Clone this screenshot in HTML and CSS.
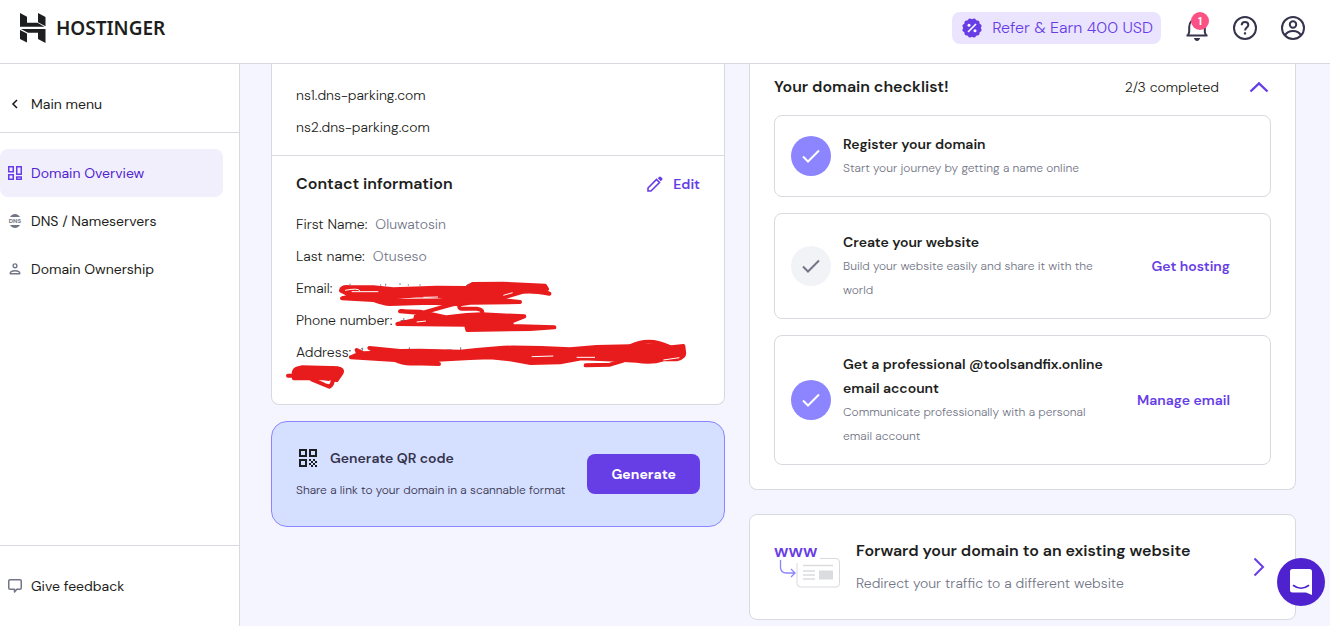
FILE: index.html
```html
<!DOCTYPE html>
<html lang="en">
<head>
<meta charset="utf-8">
<meta name="viewport" content="width=device-width, initial-scale=1">
<title>Domain Overview | Hostinger</title>
<link rel="stylesheet" href="styles.css">
</head>
<body>
<header class="topbar">
  <a class="brand" href="#">
    <svg width="26" height="30" viewBox="0 0 26 30" fill="#1d1e20" aria-hidden="true"><path d="M0 0 7 3.800V9.800H17.500L24.500 13.800H0ZM18 0 25.500 4V13.300L18 9.300ZM0 16H18L25.500 16V30L18 26V19.700H8L1 16ZM0 17 7 20.500V29.500L0 26Z"/></svg>
    <span class="brand-name">HOSTINGER</span>
  </a>
  <div class="topbar-actions">
    <a class="refer" href="#">
      <svg width="20" height="20" viewBox="0 0 20 20" aria-hidden="true"><g fill="#673de6"><rect x="2.500" y="2.500" width="15" height="15" rx="2"/><rect x="2.500" y="2.500" width="15" height="15" rx="2" transform="rotate(30 10 10)"/><rect x="2.500" y="2.500" width="15" height="15" rx="2" transform="rotate(60 10 10)"/></g><path d="m6 14 8-8" stroke="#fff" stroke-width="1.600"/><circle cx="7" cy="7.200" r="1.500" fill="#fff"/><circle cx="13" cy="12.800" r="1.500" fill="#fff"/></svg>
      <span>Refer &amp; Earn 400 USD</span>
    </a>
    <button class="icon-button" type="button" aria-label="Notifications">
      <svg width="24" height="26" viewBox="0 0 24 26" fill="none" aria-hidden="true"><path d="M1.500 20.500H22.500M3 20.500 4.200 17V12C4.200 7 7.500 4 12 4S19.800 7 19.800 12V17L21 20.500" stroke="#36344d" stroke-width="2"/><path d="M9 23H15C15 24.500 13.500 26 12 26S9 24.500 9 23Z" fill="#36344d"/></svg>
      <span class="badge">1</span>
    </button>
    <button class="icon-button" type="button" aria-label="Help">
      <svg width="24" height="24" viewBox="0 0 24 24" fill="none" stroke="#36344d" stroke-width="2" aria-hidden="true"><circle cx="12" cy="12" r="11"/><path d="M8.700 9.300C8.700 7.200 10.100 6 12 6s3.300 1.200 3.300 3c0 2.500-3.200 2.700-3.200 5.500"/><path d="M12 16.300v2.200" stroke-width="2.200"/></svg>
    </button>
    <button class="icon-button" type="button" aria-label="Account">
      <svg width="24" height="24" viewBox="0 0 24 24" fill="none" stroke="#36344d" stroke-width="2" aria-hidden="true"><circle cx="12" cy="12" r="11"/><circle cx="12" cy="8.500" r="3.200"/><path d="M4 19.500C7 13.500 17 13.500 20 19.500"/></svg>
    </button>
  </div>
</header>

<div class="shell">
  <nav class="sidebar" aria-label="Domain menu">
    <div class="side-head">
      <a class="side-link" href="#">
        <svg width="14" height="14" viewBox="0 0 14 14" fill="none" stroke="#1d1e20" stroke-width="1.600" aria-hidden="true"><path d="m9 3-4 4 4 4"/></svg>
        <span>Main menu</span>
      </a>
    </div>
    <div class="side-items">
      <a class="side-link active" href="#" aria-current="page">
        <svg width="14" height="14" viewBox="0 0 14 14" fill="none" stroke="#673de6" stroke-width="1.500" aria-hidden="true"><path d="M.75.75h4.500v5H.75zM8.750.75h4.500v7.500h-4.500zM.75 8.750h4.500v4.500H.75zM8.750 11h4.500v2.250h-4.500z"/></svg>
        <span>Domain Overview</span>
      </a>
      <a class="side-link" href="#">
        <svg width="14" height="14" viewBox="0 0 14 14" aria-hidden="true"><path d="M2 3C4.500-1 9.500-1 12 3ZM2 11C4.500 15 9.500 15 12 11Z" fill="#727586"/><text class="dns-mark" x="7" y="9" text-anchor="middle">DNS</text></svg>
        <span>DNS / Nameservers</span>
      </a>
      <a class="side-link" href="#">
        <svg width="14" height="14" viewBox="0 0 14 14" fill="none" stroke="#727586" stroke-width="1.400" aria-hidden="true"><circle cx="7" cy="3.800" r="1.900"/><path d="M2.200 11.800C2.200 7.800 11.800 7.800 11.800 11.800Z" stroke-linejoin="round"/></svg>
        <span>Domain Ownership</span>
      </a>
    </div>
    <div class="side-foot">
      <a class="side-link" href="#">
        <svg width="14" height="14" viewBox="0 0 14 14" fill="none" stroke="#727586" stroke-width="1.500" stroke-linejoin="round" aria-hidden="true"><path d="M2 .75H12A1.250 1.250 0 0 1 13.250 2V9A1.250 1.250 0 0 1 12 10.250H8.800L6.500 13V10.250H2A1.250 1.250 0 0 1 .75 9V2A1.250 1.250 0 0 1 2 .75Z"/></svg>
        <span>Give feedback</span>
      </a>
    </div>
  </nav>

  <main class="content">
    <div class="column">
      <section class="card card-scrolled">
        <ul class="rows nameservers">
          <li>ns1.dns-parking.com</li>
          <li>ns2.dns-parking.com</li>
        </ul>
        <div class="contact">
          <div class="contact-head">
            <h2 class="heading">Contact information</h2>
            <button class="text-button" type="button">
              <svg width="16" height="16" viewBox="0 0 16 16" aria-hidden="true"><path d="M1 15V12L9.500 3.500 12.500 6.500 4 15Z" fill="none" stroke="#673de6" stroke-width="1.600"/><path d="M10.800 2.200 12 1C12.500.3 13.400.3 14 1L15 2C15.700 2.600 15.700 3.500 15 4L13.800 5.200Z" fill="#673de6"/></svg>
              <span>Edit</span>
            </button>
          </div>
          <dl class="rows">
            <div class="row"><dt>First Name:</dt><dd>Oluwatosin</dd></div>
            <div class="row"><dt>Last name:</dt><dd>Otuseso</dd></div>
            <div class="row"><dt>Email:</dt><dd></dd></div>
            <div class="row"><dt>Phone number:</dt><dd>+</dd></div>
            <div class="row row-tall"><dt>Address:</dt><dd></dd></div>
          </dl>
          <svg class="scribble" width="450" height="140" viewBox="0 0 1350 420" aria-hidden="true">
            <path d="M240 47v-6M332 47v-4M347 47v-6M390 45v-5M415 47v-4M450 47v-4M588 48q4-7 15-6M272 238l6-4v8M320 238h8M418 240v-8M530 240h15M572 240v-8" fill="none" stroke="#727586" stroke-width="3"/>
            <g fill="#e81c1c" stroke="#e81c1c" stroke-width="12" stroke-linejoin="round" stroke-linecap="round">
              <path d="M213 62Q214 50 235 51L310 52 370 58 500 53 590 54 608 42 700 41 825 47 831 57 820 64 838 71Q790 62 760 65L690 86 600 92 570 90 508 79 450 76 330 84 300 72 235 73Z"/>
              <path d="M216 85 310 90Q340 102 360 102L480 98 570 103 600 98 750 96 690 90 400 92 310 84 235 80Z"/>
              <path d="M600 92 540 105 470 125 438 140M568 104Q566 116 575 116L620 116Q640 118 636 130" fill="none"/>
              <path d="M390 124 450 125 530 142 590 135 635 133 763 139 725 154 725 168 853 172 780 177 592 180 588 164 382 162 435 150 438 138 460 130Z"/>
              <path d="M260 240 265 252 243 262 375 270Q400 282 430 280L507 282 475 271 600 264 660 262 720 268 782 279 870 277 935 265 1060 270 1100 272Q1145 280 1180 268L1220 268Q1246 262 1242 245L1240 228 1205 232 1180 226 1080 229 980 231 900 238Q800 232 700 233L620 240 570 245 450 242 390 243 298 234 325 248 280 250Z"/>
              <path d="M1080 229Q1138 200 1200 232M1060 272 1020 284 947 286" fill="none"/>
              <path d="M72 325Q68 300 80 296L95 292 180 294Q225 292 214 310L200 330 160 325 110 325Z"/>
              <path d="M54 317H70M125 328 165 345 178 350Q188 345 188 331" fill="none"/>
            </g>
            <g fill="none" stroke="#fff" stroke-width="3"><path d="M225 61q40-8 45 2M245 65h80M460 82l44-1M700 76l28-8M440 156l28-3M785 260l65-2M920 262h55M1180 270l48-7M182 332l-15 7"/></g>
          </svg>
        </div>
      </section>

      <section class="qr">
        <div>
          <h2 class="qr-title">
            <svg width="24" height="24" viewBox="0 0 24 24" aria-hidden="true"><path d="M4 4h6v6H4zM14 4h6v6h-6zM4 14h6v6H4z" fill="none" stroke="#1d1e20" stroke-width="2"/><path d="M13 13h2v2h-2zM17 13h2v2h-2zM15 15h2v2h-2zM19 15h2v2h-2zM13 17h2v2h-2zM17 17h2v2h-2zM15 19h2v2h-2zM19 19h2v2h-2z" fill="#1d1e20"/></svg>
            <span>Generate QR code</span>
          </h2>
          <p class="qr-note">Share a link to your domain in a scannable format</p>
        </div>
        <button class="primary" type="button">Generate</button>
      </section>
    </div>

    <div class="column column-wide">
      <section class="card card-scrolled checklist">
        <div class="checklist-head">
          <h2 class="heading">Your domain checklist!</h2>
          <span>2/3 completed</span>
          <button class="icon-button" type="button" aria-label="Collapse checklist">
            <svg width="24" height="24" viewBox="0 0 24 24" fill="none" stroke="#673de6" stroke-width="2.400" aria-hidden="true"><path d="m3.500 16.500 8.500-8 8.500 8"/></svg>
          </button>
        </div>
        <ul class="steps">
          <li class="step">
            <span class="tick"><svg width="20" height="16" viewBox="0 0 20 16" aria-hidden="true"><path d="m2 8.500 5 5L18 2.500"/></svg></span>
            <div class="step-text"><h3>Register your domain</h3><p>Start your journey by getting a name online</p></div>
          </li>
          <li class="step">
            <span class="tick pending"><svg width="20" height="16" viewBox="0 0 20 16" aria-hidden="true"><path d="m2 8.500 5 5L18 2.500"/></svg></span>
            <div class="step-text"><h3>Create your website</h3><p>Build your website easily and share it with the world</p></div>
            <a class="step-link" href="#">Get hosting</a>
          </li>
          <li class="step">
            <span class="tick"><svg width="20" height="16" viewBox="0 0 20 16" aria-hidden="true"><path d="m2 8.500 5 5L18 2.500"/></svg></span>
            <div class="step-text"><h3>Get a professional @toolsandfix.online email account</h3><p>Communicate professionally with a personal email account</p></div>
            <a class="step-link" href="#">Manage email</a>
          </li>
        </ul>
      </section>

      <a class="card forward" href="#">
        <svg width="66" height="44" viewBox="0 0 66 44" fill="none" aria-hidden="true"><text class="www-mark" x="0" y="12">www</text><path d="M6.500 15v7q0 6 6 6h8M17 24l4 4-4 4" stroke="#8c85ff" stroke-width="1.300"/><path d="M46 13.500H62A3.500 3.500 0 0 1 65.500 17V38.500A3.500 3.500 0 0 1 62 42H26.500A3.500 3.500 0 0 1 23 38.500V18" stroke="#d8dae0"/><path d="M29 20.500h30M29 26h12M29 30h12M29 34h12" stroke="#dadce0" stroke-width="1.600"/><path d="M45 25.500h14v9H45z" fill="#dadce0"/></svg>
        <span class="forward-text"><strong>Forward your domain to an existing website</strong><span>Redirect your traffic to a different website</span></span>
        <svg width="24" height="24" viewBox="0 0 24 24" fill="none" stroke="#673de6" stroke-width="2" aria-hidden="true"><path d="m7.500 3.500 8.500 8.500-8.500 8.500"/></svg>
      </a>
    </div>
  </main>
</div>

<button class="chat" type="button" aria-label="Open chat">
  <svg width="24" height="28" viewBox="0 0 24 28" aria-hidden="true"><path d="M3.500 1H20.500A2.500 2.500 0 0 1 23 3.500V27L17 24.500H3.500A2.500 2.500 0 0 1 1 22V3.500A2.500 2.500 0 0 1 3.500 1Z" fill="#fff"/><path d="M4.500 17.500Q12 23 19.500 17.500" fill="none" stroke="#4f22cf" stroke-width="1.600" stroke-linecap="round"/></svg>
</button>
</body>
</html>
```
FILE: styles.css
```css
* { box-sizing: border-box; }
body {
  margin: 0;
  height: 100vh;
  display: flex;
  flex-direction: column;
  overflow: hidden;
  background: #f4f5ff;
  color: #1d1e20;
  font: 14px/24px "DM Sans", Inter, sans-serif;
}
h2, h3, p, ul, dl, dd { margin: 0; padding: 0; }
ul { list-style: none; }
a { color: inherit; text-decoration: none; }
button { padding: 0; border: 0; background: none; font: inherit; cursor: pointer; }
svg { display: block; flex: none; }

.topbar {
  flex: none;
  height: 64px;
  padding: 0 25px 8px 20px;
  display: flex;
  align-items: center;
  justify-content: space-between;
  background: #fff;
  border-bottom: 1px solid #d8dae0;
}
.brand { display: flex; align-items: center; gap: 10px; }
.brand-name { font: 600 19px/24px "Noto Sans", sans-serif; }
.topbar-actions { display: flex; align-items: center; gap: 24px; }
.topbar-actions .icon-button { position: relative; width: 24px; }
.refer {
  height: 32px;
  padding: 0 8px 0 10px;
  display: flex;
  align-items: center;
  gap: 10px;
  border-radius: 8px;
  background: #ebe4ff;
  color: #673de6;
  font-size: 16px;
  font-weight: 300;
}
.badge {
  position: absolute;
  top: -3px;
  left: 6px;
  width: 18px;
  height: 18px;
  border-radius: 50%;
  background: #fc5185;
  color: #fff;
  font-size: 11px;
  font-weight: 700;
  line-height: 18px;
}

.shell { flex: 1; min-height: 0; display: flex; }
.sidebar {
  flex: none;
  width: 240px;
  display: flex;
  flex-direction: column;
  background: #fff;
  border-right: 1px solid #d8dae0;
}
.side-head { padding: 16px 16px 4px 0; border-bottom: 1px solid #d8dae0; }
.side-items { flex: 1; padding: 16px 16px 0 0; }
.side-foot { padding: 16px 16px 16px 0; border-top: 1px solid #d8dae0; }
.side-link {
  height: 48px;
  padding: 0 8px;
  display: flex;
  align-items: center;
  gap: 9px;
  border-radius: 8px;
}
.side-link.active { background: #f2effd; color: #5025d1; }
.side-link svg { overflow: visible; }
.dns-mark { font-size: 6px; font-weight: 800; fill: #727586; }
.www-mark { font-size: 18px; font-weight: 600; fill: #673de6; }

.content {
  flex: 1;
  padding: 0 34px 0 31px;
  display: grid;
  grid-template-columns: 454fr 547fr;
  align-items: start;
  gap: 24px;
}
.column { display: flex; flex-direction: column; gap: 16px; min-width: 0; }
.column-wide { gap: 24px; }
.card { background: #fff; border: 1px solid #d8dae0; border-radius: 8px; }
.card-scrolled { border-top: 0; border-radius: 0 0 8px 8px; }
.heading { font-size: 16px; line-height: 24px; font-weight: 600; }

.rows { display: flex; flex-direction: column; gap: 8px; font-weight: 300; }
.nameservers { padding: 19px 24px 16px; border-bottom: 1px solid #d8dae0; }
.contact { position: relative; padding: 16px 24px; }
.contact-head { display: flex; justify-content: space-between; margin-bottom: 16px; }
.text-button { display: flex; align-items: center; gap: 10px; color: #673de6; font-weight: 600; }
.row { display: flex; gap: 8px; }
.row dd { color: #727586; }
.row-tall { height: 48px; }
.scribble { position: absolute; left: -2px; top: 114px; }

.qr {
  padding: 24px;
  display: flex;
  align-items: center;
  justify-content: space-between;
  gap: 8px;
  border: 1px solid #8c85ff;
  border-radius: 16px;
  background: #d5dfff;
  color: #36344d;
}
.qr-title { display: flex; gap: 10px; font-size: 14px; font-weight: 600; }
.qr-note { margin-top: 8px; font-size: 12px; font-weight: 300; white-space: nowrap; }
.primary {
  flex: none;
  height: 40px;
  padding: 0 24px;
  border-radius: 8px;
  background: #673de6;
  color: #fff;
  font-weight: 700;
}

.checklist { padding: 11px 24px 24px; }
.checklist-head { display: flex; align-items: center; margin-bottom: 16px; font-weight: 300; }
.checklist-head .heading { flex: 1; }
.checklist-head .icon-button { margin-left: 28px; }
.steps { display: flex; flex-direction: column; gap: 16px; }
.step {
  padding: 16px 40px 16px 16px;
  display: flex;
  align-items: center;
  gap: 12px;
  border: 1px solid #d8dae0;
  border-radius: 8px;
}
.tick {
  flex: none;
  width: 40px;
  height: 40px;
  display: grid;
  place-items: center;
  border-radius: 50%;
  background: #8c85ff;
}
.tick path { fill: none; stroke: #fff; stroke-width: 2; }
.pending { background: #f2f3f6; }
.pending path { stroke: #727586; }
.step-text { flex: 1; max-width: 268px; }
.step h3 { font-size: 14px; font-weight: 600; }
.step p { font-size: 12px; font-weight: 300; color: #727586; }
.step-link { margin-left: auto; color: #673de6; font-weight: 600; white-space: nowrap; }

.forward { padding: 24px; display: flex; align-items: center; gap: 16px; }
.forward-text { flex: 1; display: flex; flex-direction: column; gap: 8px; font-weight: 300; color: #727586; }
.forward-text strong { font-size: 16px; font-weight: 600; color: #1d1e20; }

.chat {
  position: fixed;
  right: 5px;
  bottom: 20px;
  width: 48px;
  height: 48px;
  display: grid;
  place-items: center;
  border-radius: 50%;
  background: #4f22cf;
}
```
